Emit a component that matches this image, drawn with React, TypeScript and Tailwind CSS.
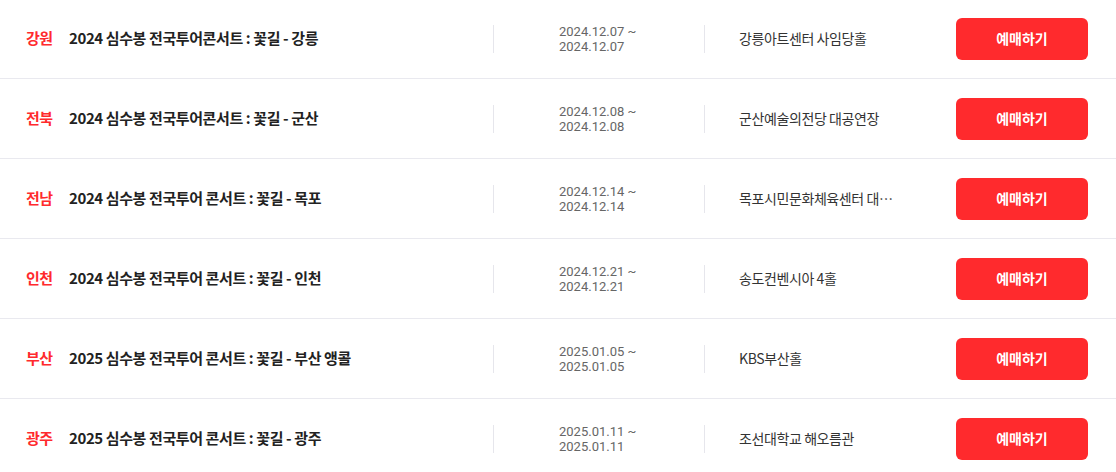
const concerts = [
  { region: "강원", title: "2024 심수봉 전국투어콘서트 : 꽃길 - 강릉", start: "2024.12.07", end: "2024.12.07", venue: "강릉아트센터 사임당홀" },
  { region: "전북", title: "2024 심수봉 전국투어콘서트 : 꽃길 - 군산", start: "2024.12.08", end: "2024.12.08", venue: "군산예술의전당 대공연장" },
  { region: "전남", title: "2024 심수봉 전국투어 콘서트 : 꽃길 - 목포", start: "2024.12.14", end: "2024.12.14", venue: "목포시민문화체육센터 대공연장" },
  { region: "인천", title: "2024 심수봉 전국투어 콘서트 : 꽃길 - 인천", start: "2024.12.21", end: "2024.12.21", venue: "송도컨벤시아 4홀" },
  { region: "부산", title: "2025 심수봉 전국투어 콘서트 : 꽃길 - 부산 앵콜", start: "2025.01.05", end: "2025.01.05", venue: "KBS부산홀" },
  { region: "광주", title: "2025 심수봉 전국투어 콘서트 : 꽃길 - 광주", start: "2025.01.11", end: "2025.01.11", venue: "조선대학교 해오름관" },
];

const App = () => {
  return (
    <div className="-mt-px w-[1116px] bg-white font-['Noto_Sans_CJK_KR','Noto_Sans',sans-serif]">
      <ul>
        {concerts.map((c) => (
          <li
            key={c.region}
            className="flex h-[80px] items-center border-b border-[#e9e9ef] pl-[26px] pr-[28px]"
          >
            <span className="w-[43px] shrink-0 text-[15px] font-bold tracking-[-0.5px] text-[#ff2a2d]">
              {c.region}
            </span>
            <p className="w-[424px] shrink-0 truncate text-[15px] font-bold tracking-[-0.4px] text-[#222]">
              {c.title}
            </p>
            <div className="flex h-[28px] w-[211px] shrink-0 items-center border-l border-[#e6e6ec] pl-[65px]">
              <p className="font-['Roboto',sans-serif] text-[13px] leading-[15px] text-[#666]">
                {c.start} ~
                <br />
                {c.end}
              </p>
            </div>
            <div className="flex h-[28px] flex-1 items-center border-l border-[#e6e6ec] pl-[34px]">
              <p className="w-[160px] truncate text-[14px] tracking-[-0.4px] text-[#333]">
                {c.venue}
              </p>
            </div>
            <button className="h-[42px] w-[132px] rounded-[6px] bg-[#ff2a2d] text-[14px] font-bold text-white">
              예매하기
            </button>
          </li>
        ))}
      </ul>
    </div>
  );
};

export default App;
